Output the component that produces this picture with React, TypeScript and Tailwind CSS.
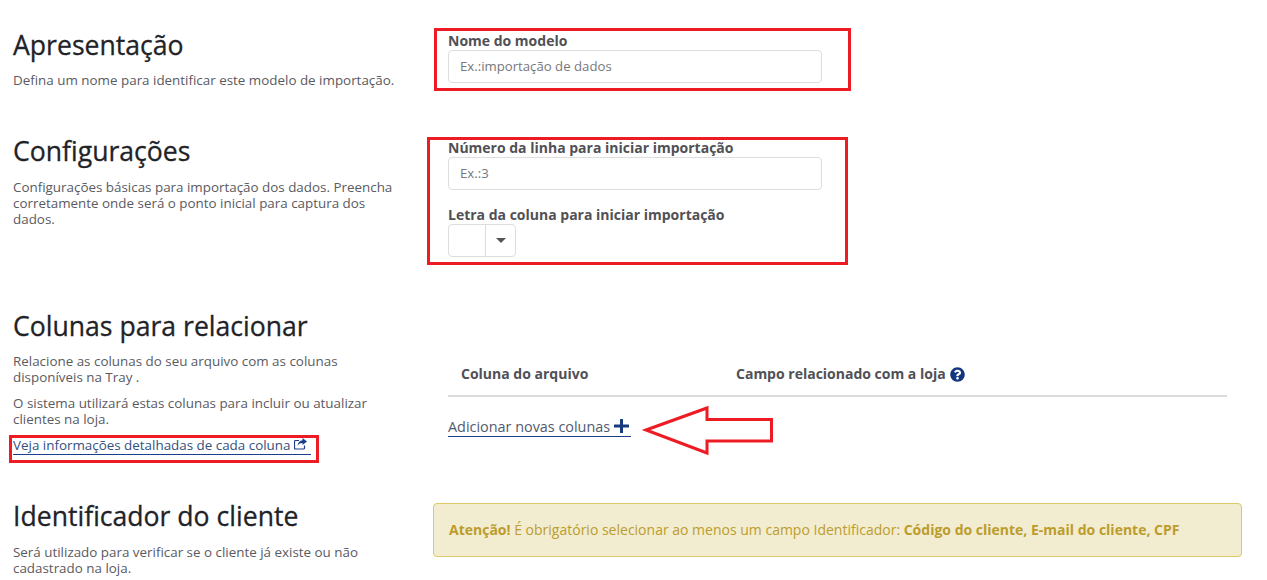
import { FaQuestionCircle } from "react-icons/fa";

function SectionTitle({ children }: { children: React.ReactNode }) {
  return (
    <h2 className="h-[30px] pt-px text-[26.6px] leading-[28px] text-[#1f2328] [-webkit-text-stroke:0.3px_#1f2328]">
      {children}
    </h2>
  );
}

function Help({ children, className = "" }: { children: React.ReactNode; className?: string }) {
  return <p className={`text-[13.4px] leading-4 text-[#5a5a5f] ${className}`}>{children}</p>;
}

function Label({ children }: { children: React.ReactNode }) {
  return <label className="block h-[18px] text-sm leading-[18px] font-bold text-[#505055]">{children}</label>;
}

function TextField({ placeholder }: { placeholder: string }) {
  return (
    <input
      placeholder={placeholder}
      className="block h-[33px] w-[374px] rounded border border-[#dedede] bg-white pr-3 pb-[2px] pl-[11px] text-[13.2px] text-[#555] placeholder:text-[#77777c]"
    />
  );
}

function RedBox({ className }: { className: string }) {
  return <div className={`pointer-events-none absolute border-[3px] border-[#ed1c24] ${className}`} />;
}

export default function App() {
  return (
    <div className="relative h-[580px] w-[1267px] overflow-hidden bg-white font-['Open_Sans',sans-serif]">
      <div className="pt-[30px] pl-[13px]">
        <section className="flex h-[106px]">
          <div className="w-[435px]">
            <SectionTitle>Apresentação</SectionTitle>
            <Help className="mt-3">Defina um nome para identificar este modelo de importação.</Help>
          </div>
          <div className="pt-[2px]">
            <Label>Nome do modelo</Label>
            <TextField placeholder="Ex.:importação de dados" />
          </div>
        </section>

        <section className="flex h-[175px]">
          <div className="w-[435px]">
            <SectionTitle>Configurações</SectionTitle>
            <Help className="mt-[13px] w-[385px]">
              Configurações básicas para importação dos dados. Preencha corretamente onde será o ponto inicial para
              captura dos dados.
            </Help>
          </div>
          <div className="pt-[3px]">
            <Label>Número da linha para iniciar importação</Label>
            <TextField placeholder="Ex.:3" />
            <div className="mt-4">
              <Label>Letra da coluna para iniciar importação</Label>
            </div>
            <div className="flex h-[33px] w-[68px] rounded border border-[#dedede] bg-white">
              <div className="w-[37px] border-r border-[#dedede]" />
              <div className="flex flex-1 items-center justify-center">
                <span className="h-0 w-0 border-x-[5px] border-t-[5px] border-x-transparent border-t-[#555]" />
              </div>
            </div>
          </div>
        </section>

        <section className="flex h-[190px]">
          <div className="w-[435px]">
            <SectionTitle>Colunas para relacionar</SectionTitle>
            <Help className="mt-3 w-[385px]">
              Relacione as colunas do seu arquivo com as colunas disponíveis na Tray .
            </Help>
            <Help className="mt-[10px] w-[385px]">
              O sistema utilizará estas colunas para incluir ou atualizar clientes na loja.
            </Help>
            <a className="mt-2 inline-flex h-[20px] items-center gap-1 border-b border-[#1a3e8c] pr-1 text-[13.4px] leading-4 text-[#34507f]">
              Veja informações detalhadas de cada coluna
              <svg width="13" height="12" viewBox="0 0 13 12" className="-mt-[2px]">
                <path d="M5 2.5H1.5a1 1 0 0 0-1 1v6.5a1 1 0 0 0 1 1H9.5a1 1 0 0 0 1-1V7.5" fill="none" stroke="#1a3e8c" strokeWidth="1.2" />
                <path d="M8.5 0 13 3.5 8.5 7V5C6.5 5 4.8 5.6 3.5 7.8 3.8 4.6 5.8 2.4 8.5 2.2Z" fill="#1a3e8c" />
              </svg>
            </a>
          </div>
          <div className="w-[779px] pt-[40px]">
            <div className="flex h-[46px] items-center border-b-2 border-[#dcdcdc] pt-[2px] text-sm font-bold text-[#505055]">
              <span className="w-[288px] pl-[13px]">Coluna do arquivo</span>
              <span className="flex items-center gap-1">
                Campo relacionado com a loja
                <FaQuestionCircle className="text-[15px] text-[#14367f]" />
              </span>
            </div>
            <a className="mt-[20px] inline-flex h-[20px] items-center gap-1 border-b border-[#1a3e8c] pr-[2px] text-[14.4px] text-[#505a6e]">
              Adicionar novas colunas
              <svg width="15" height="14" viewBox="0 0 15 14" className="-mt-[1px]">
                <path d="M6 .5a.5.5 0 0 1 .5-.5h2a.5.5 0 0 1 .5.5V5.5h5.5a.5.5 0 0 1 .5.5v2a.5.5 0 0 1-.5.5H9v5a.5.5 0 0 1-.5.5h-2a.5.5 0 0 1-.5-.5v-5H.5A.5.5 0 0 1 0 8V6a.5.5 0 0 1 .5-.5H6Z" fill="#17397f" />
              </svg>
            </a>
          </div>
        </section>

        <section className="flex">
          <div className="w-[420px]">
            <SectionTitle>Identificador do cliente</SectionTitle>
            <Help className="mt-[13px] w-[385px]">
              Será utilizado para verificar se o cliente já existe ou não cadastrado na loja.
            </Help>
          </div>
          <div className="mt-[2px] flex h-[54px] w-[809px] items-center rounded border border-[#dcc968] bg-[#f2ecd0] px-[15px] text-sm text-[#bc9c2c]">
            <p>
              <b>Atenção!</b> É obrigatório selecionar ao menos um campo Identificador:{" "}
              <b>Código do cliente, E-mail do cliente, CPF</b>
            </p>
          </div>
        </section>
      </div>

      <RedBox className="top-[28px] left-[434px] h-[63px] w-[417px]" />
      <RedBox className="top-[137px] left-[427px] h-[128px] w-[421px]" />
      <RedBox className="top-[435px] left-[9px] h-[28px] w-[310px]" />
      <svg className="absolute top-[400px] left-[636px]" width="144" height="60" viewBox="636 400 144 60">
        <path d="M646 430 L707 408 L707 419.5 L771.5 419.5 L771.5 441 L707 441 L707 453 Z" fill="none" stroke="#ed1c24" strokeWidth="3" />
      </svg>
    </div>
  );
}
